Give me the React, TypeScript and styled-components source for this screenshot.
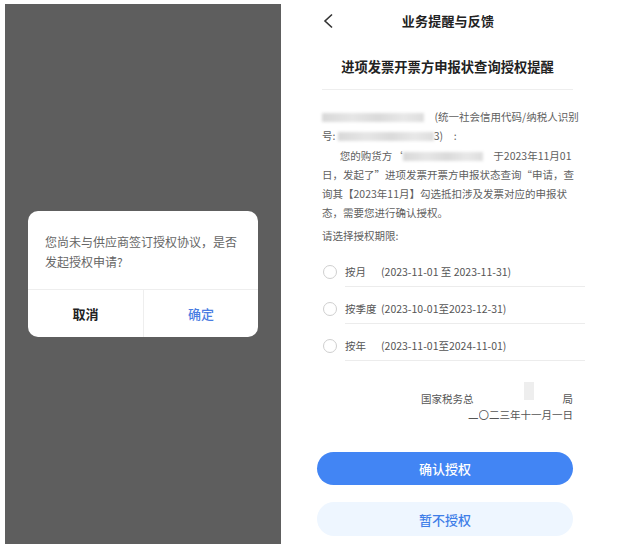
import React from 'react';
import styled, { createGlobalStyle } from 'styled-components';

const GlobalStyle = createGlobalStyle`
  html, body {
    margin: 0;
    padding: 0;
    background: #ffffff;
  }
  body {
    font-family: "Noto Sans CJK SC", "Noto Sans", sans-serif;
  }
`;

const Page = styled.div`
  display: flex;
  align-items: flex-start;
  width: 623px;
  height: 547px;
  overflow: hidden;
`;

const MaskScreen = styled.div`
  display: flex;
  align-items: center;
  justify-content: center;
  width: 276px;
  height: 540px;
  margin: 4px 0 0 5px;
  background: #5e5e5e;
`;

const Dialog = styled.div`
  width: 230px;
  background: #ffffff;
  border-radius: 10px;
  overflow: hidden;
`;

const DialogMessage = styled.div`
  padding: 21px 17px 17px;
  font-size: 12px;
  line-height: 20px;
  color: #666666;
  white-space: nowrap;
`;

const DialogActions = styled.div`
  display: grid;
  grid-template-columns: 1fr 1fr;
  height: 47px;
  border-top: 1px solid #eeeeee;
`;

const DialogButton = styled.div<{ $primary?: boolean }>`
  display: flex;
  align-items: center;
  justify-content: center;
  font-size: 13px;
  font-weight: ${p => (p.$primary ? 500 : 700)};
  color: ${p => (p.$primary ? '#4a7de2' : '#222222')};
  & + & {
    border-left: 1px solid #eeeeee;
  }
`;

const Screen = styled.div`
  width: 251px;
  margin-left: 19px;
  padding: 0 27px 0 22px;
  color: #606060;
`;

const Header = styled.div`
  position: relative;
  display: flex;
  align-items: center;
  justify-content: center;
  height: 40px;
  margin-right: -1px;
`;

const BackIcon = styled.svg`
  position: absolute;
  left: 1px;
  top: 13px;
`;

const HeaderTitle = styled.div`
  font-size: 13px;
  font-weight: 700;
  color: #222222;
  letter-spacing: 0.2px;
`;

const NoticeTitle = styled.div`
  margin-top: 17px;
  padding-bottom: 12px;
  border-bottom: 1px solid #eeeeee;
  font-size: 13.3px;
  line-height: 20px;
  font-weight: 700;
  color: #222222;
  text-align: center;
`;

const Paragraph = styled.p<{ $indent?: boolean }>`
  margin: 0;
  font-size: 10.5px;
  line-height: 19px;
  white-space: nowrap;
  text-indent: ${p => (p.$indent ? '1.7em' : '0')};
`;

const Body = styled.div`
  margin-top: 17px;
  & > ${Paragraph} + ${Paragraph} {
    margin-top: 1px;
  }
`;

const Redacted = styled.span<{ $w: number }>`
  display: inline-block;
  width: ${p => p.$w}px;
  height: 9px;
  vertical-align: -1px;
  background: linear-gradient(90deg, #d8d8d8, #e6e6e6 30%, #dadada 55%, #e8e8e8 80%, #dddddd);
  filter: blur(1.6px);
`;

const Prompt = styled.div`
  margin-top: 4px;
  font-size: 10.5px;
  line-height: 19px;
`;

const OptionList = styled.div`
  margin-top: 5px;
  margin-right: -12px;
`;

const Option = styled.div`
  display: flex;
  align-items: flex-start;
  gap: 8px;
`;

const RadioCircle = styled.span`
  flex: none;
  width: 12px;
  height: 12px;
  margin: 15px 0 0 1px;
  border: 1px solid #cfcfcf;
  border-radius: 50%;
`;

const OptionBody = styled.div`
  flex: 1;
  display: flex;
  padding: 12px 0 4px;
  border-bottom: 1px solid #ececec;
  font-size: 10.5px;
  line-height: 20px;
  color: #555555;
  white-space: nowrap;
`;

const OptionLabel = styled.span`
  min-width: 35px;
  margin-right: 1px;
`;

const Signature = styled.div`
  margin-top: 30px;
  font-size: 10.5px;
  line-height: 16px;
  text-align: right;
  color: #555555;
  white-space: nowrap;
`;

const WhiteGap = styled.span`
  position: relative;
  display: inline-block;
  width: 89px;
  height: 12px;
`;

const GreyPatch = styled.span`
  position: absolute;
  left: 50px;
  top: -9px;
  width: 10px;
  height: 18px;
  background: #eeeeee;
`;

const PartlyHidden = styled.span`
  position: relative;
`;

const Cover = styled.span`
  position: absolute;
  left: -2px;
  top: 0;
  width: 120%;
  height: 11px;
  background: #ffffff;
`;

const ActionButton = styled.div<{ $ghost?: boolean }>`
  display: flex;
  align-items: center;
  justify-content: center;
  height: ${p => (p.$ghost ? 34 : 33)}px;
  margin: ${p => (p.$ghost ? '17px 0 0 -5px' : '29px 0 0 -5px')};
  border-radius: 17px;
  background: ${p => (p.$ghost ? '#eef6ff' : '#4285f4')};
  color: ${p => (p.$ghost ? '#3f7ee8' : '#ffffff')};
  font-size: 13px;
  font-weight: 500;
`;

const options = [
  { label: '按月', range: '(2023-11-01 至 2023-11-31)' },
  { label: '按季度', range: '(2023-10-01至2023-12-31)' },
  { label: '按年', range: '(2023-11-01至2024-11-01)' },
];

export default function App() {
  return (
    <>
      <GlobalStyle />
      <Page>
        <MaskScreen>
          <Dialog>
            <DialogMessage>
              您尚未与供应商签订授权协议，是否
              <br />
              发起授权申请?
            </DialogMessage>
            <DialogActions>
              <DialogButton>取消</DialogButton>
              <DialogButton $primary>确定</DialogButton>
            </DialogActions>
          </Dialog>
        </MaskScreen>

        <Screen>
          <Header>
            <BackIcon width="12" height="16" viewBox="0 0 12 16">
              <polyline points="9,1.5 2,8 9,14.5" fill="none" stroke="#333" strokeWidth="1.6" />
            </BackIcon>
            <HeaderTitle>业务提醒与反馈</HeaderTitle>
          </Header>

          <NoticeTitle>进项发票开票方申报状查询授权提醒</NoticeTitle>

          <Body>
            <Paragraph>
              <Redacted $w={102} />　(统一社会信用代码/纳税人识别
              <br />
              号: <Redacted $w={96} />3)　:
            </Paragraph>
            <Paragraph $indent>
              您的购货方‘<Redacted $w={80} />　于2023年11月01
              <br />
              日，发起了”进项发票开票方申报状态查询“申请，查
              <br />
              询其【2023年11月】勾选抵扣涉及发票对应的申报状
              <br />
              态，需要您进行确认授权。
            </Paragraph>
          </Body>

          <Prompt>请选择授权期限:</Prompt>

          <OptionList>
            {options.map(o => (
              <Option key={o.label}>
                <RadioCircle />
                <OptionBody>
                  <OptionLabel>{o.label}</OptionLabel>
                  <span>{o.range}</span>
                </OptionBody>
              </Option>
            ))}
          </OptionList>

          <Signature>
            <div>
              国家税务总
              <WhiteGap>
                <GreyPatch />
              </WhiteGap>
              局
            </div>
            <div>
              <PartlyHidden>
                二<Cover />
              </PartlyHidden>
              〇二三年十一月一日
            </div>
          </Signature>

          <ActionButton>确认授权</ActionButton>
          <ActionButton $ghost>暂不授权</ActionButton>
        </Screen>
      </Page>
    </>
  );
}
